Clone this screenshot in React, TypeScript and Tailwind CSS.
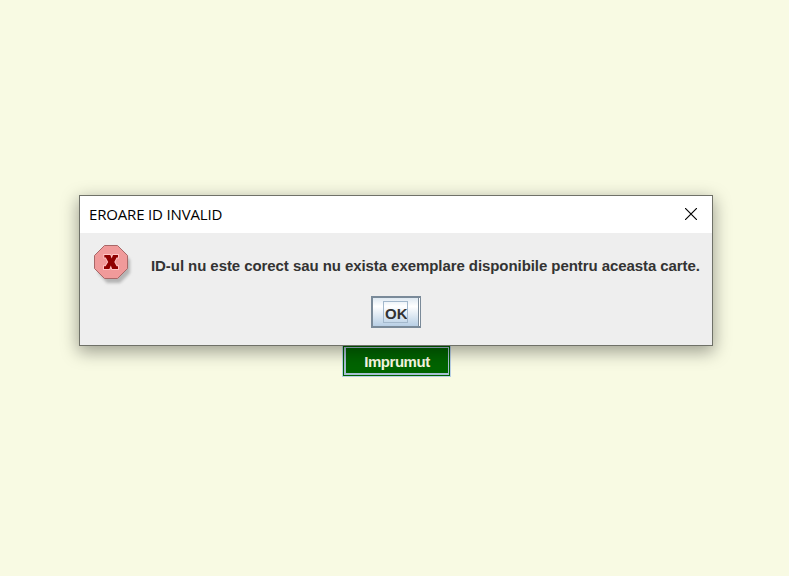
import React from "react";

function ErrorIcon() {
  return (
    <svg width="40" height="42" viewBox="0 0 40 42" className="block">
      <defs>
        <filter id="soft" x="-20%" y="-20%" width="150%" height="150%">
          <feGaussianBlur stdDeviation="1.6" />
        </filter>
      </defs>
      <path d="M13 5H26L36 15V28L26 38H13L4 28V15Z" fill="#b4b4b4" filter="url(#soft)" />
      <path d="M10.5 .5H23.5L33.5 10.5V23.5L23.5 33.5H10.5L.5 23.5V10.5Z" fill="#f09a9a" stroke="#a86868" />
      <path
        d="M10.3 10H16.3L17.7 13.6L19 10H24V12.6H22.6L20.3 17L22.6 21.2H24V24H18.2L16.8 20.6L15.4 24H10V21.2H11.6L14.2 17L11.8 12.6H10.3Z"
        fill="#900000"
        stroke="#ffc4c4"
        strokeWidth="1.8"
        paintOrder="stroke"
      />
    </svg>
  );
}

function Dialog() {
  return (
    <section
      role="alertdialog"
      className="relative z-10 flex h-[151px] w-[634px] shrink-0 flex-col border border-[#6f7168] bg-[#eeeeee] shadow-[0_5px_16px_1px_rgba(0,0,0,0.36)]"
    >
      <header className="flex h-[37px] shrink-0 items-center justify-between bg-white pl-[9px] pr-[15px]">
        <h1 className="whitespace-nowrap pb-px font-['Open_Sans','Noto_Sans',sans-serif] text-[15px] leading-5 tracking-[-0.17px] text-black">
          EROARE ID INVALID
        </h1>
        <button aria-label="Close" className="mb-[2px] block">
          <svg width="12" height="12" viewBox="0 0 12 12" className="block">
            <path d="M0 0L12 12M12 0L0 12" stroke="#000" strokeWidth="1.15" />
          </svg>
        </button>
      </header>
      <div className="flex h-[63px] shrink-0 pl-[14px] pt-3">
        <ErrorIcon />
        <p className="ml-[17px] mt-[11px] whitespace-nowrap text-[15px] font-bold leading-5 tracking-[-0.07px] text-[#333333]">
          ID-ul nu este corect sau nu exista exemplare disponibile pentru aceasta carte.
        </p>
      </div>
      <div className="flex pl-[291px]">
        <button className="flex h-8 w-[50px] border-2 border-r border-[#7a8a99] bg-linear-to-b from-[#dfe9f2] via-white via-30% to-[#b8cfe5]">
          <span className="ml-[10px] mt-[3px] block h-[22px] w-[25px] overflow-hidden whitespace-nowrap border border-[#a3b8cc] pl-px text-left text-[15px] font-bold leading-[23px] text-[#333333]">
            OK
          </span>
          <span className="ml-[10px] h-7 w-px bg-[#7a8a99]" />
          <span className="h-7 w-px bg-white" />
        </button>
      </div>
    </section>
  );
}

export default function App() {
  return (
    <main className="flex h-[576px] w-[789px] flex-col overflow-hidden bg-[#f8fae3] pl-[79px] pt-[195px] font-['Liberation_Sans',Arial,sans-serif]">
      <Dialog />
      <button className="ml-[263px] mt-[-1px] flex h-8 w-[109px] border border-[#b8cfe5] bg-[#006400] p-px">
        <span className="flex h-full w-[105px] items-center justify-center border border-b-2 border-l-2 border-[#a8bfd5] pt-[3px] text-[15px] font-bold leading-5 tracking-[-0.45px] text-[#f8fae3]">
          Imprumut
        </span>
      </button>
    </main>
  );
}
